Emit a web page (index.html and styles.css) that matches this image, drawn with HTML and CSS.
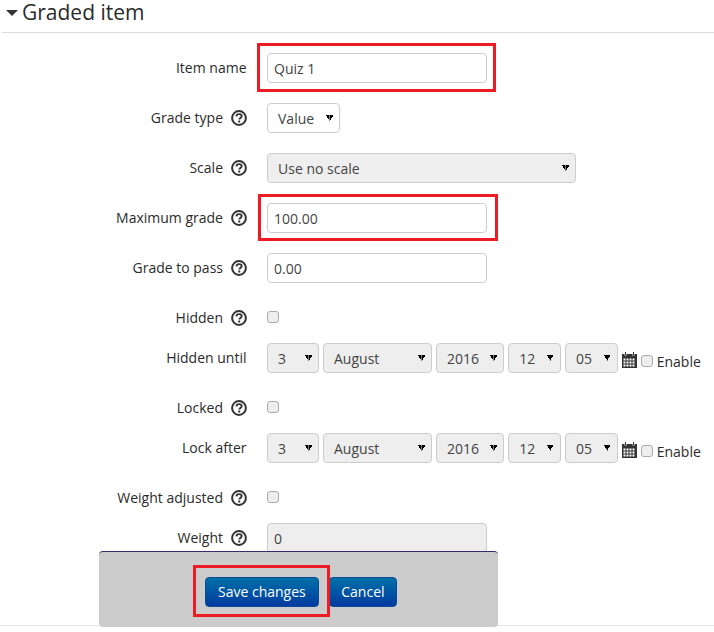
FILE: index.html
```html
<!DOCTYPE html>
<html lang="en">
<head>
    <meta charset="UTF-8">
    <meta name="viewport" content="width=device-width, initial-scale=1.0">
    <title>Graded item</title>
    <link rel="stylesheet" href="styles.css">
</head>
<body>

<svg class="defs" width="0" height="0">
    <symbol id="help" viewBox="0 0 16 16">
        <circle cx="8" cy="8" r="6.9" fill="none" stroke="currentColor" stroke-width="2"/>
        <path d="M5.4 6.4c.1-1.5 1.2-2.3 2.7-2.3 1.5 0 2.6.8 2.6 2 0 1-.6 1.5-1.4 2-.6.4-.9.7-.9 1.5" fill="none" stroke="currentColor" stroke-width="1.9"/>
        <rect x="7.2" y="10.5" width="2" height="2" fill="currentColor"/>
    </symbol>
    <symbol id="calendar" viewBox="0 0 15 16">
        <path d="M0 2h2.5v1.5h2V2h6v1.5h2V2H15v14H0z" fill="#333"/>
        <path d="M3 0h1v3H3zM11 0h1v3h-1z" fill="#333"/>
        <path d="M1.5 6.5h2v2h-2zM4.5 6.5h2v2h-2zM7.5 6.5h2v2h-2zM10.5 6.5h2v2h-2zM1.5 9.5h2v2h-2zM4.5 9.5h2v2h-2zM7.5 9.5h2v2h-2zM10.5 9.5h2v2h-2zM1.5 12.5h2v2h-2zM4.5 12.5h2v2h-2zM7.5 12.5h2v2h-2zM10.5 12.5h2v2h-2z" fill="#fff"/>
    </symbol>
</svg>

<div class="page">
    <h3 class="section-title"><span class="caret"></span>Graded item</h3>

    <form class="form">
        <div class="row">
            <label class="label plain">Item name</label>
            <input class="input" type="text" value="Quiz 1">
        </div>
        <div class="row">
            <label class="label">Grade type <svg class="help"><use href="#help"/></svg></label>
            <select class="select w-type"><option>Value</option></select>
        </div>
        <div class="row">
            <label class="label">Scale <svg class="help"><use href="#help"/></svg></label>
            <select class="select off w-scale"><option>Use no scale</option></select>
        </div>
        <div class="row">
            <label class="label">Maximum grade <svg class="help"><use href="#help"/></svg></label>
            <input class="input" type="text" value="100.00">
        </div>
        <div class="row">
            <label class="label">Grade to pass <svg class="help"><use href="#help"/></svg></label>
            <input class="input" type="text" value="0.00">
        </div>
        <div class="row short">
            <label class="label">Hidden <svg class="help"><use href="#help"/></svg></label>
            <input class="check" type="checkbox">
        </div>
        <div class="row">
            <label class="label plain">Hidden until</label>
            <div class="date">
                <select class="select off w-day"><option>3</option></select>
                <select class="select off w-month"><option>August</option></select>
                <select class="select off w-year"><option>2016</option></select>
                <select class="select off w-time"><option>12</option></select>
                <select class="select off w-time"><option>05</option></select>
                <svg class="calendar"><use href="#calendar"/></svg>
                <label class="enable"><input class="check" type="checkbox"> Enable</label>
            </div>
        </div>
        <div class="row short">
            <label class="label">Locked <svg class="help"><use href="#help"/></svg></label>
            <input class="check" type="checkbox">
        </div>
        <div class="row">
            <label class="label plain">Lock after</label>
            <div class="date">
                <select class="select off w-day"><option>3</option></select>
                <select class="select off w-month"><option>August</option></select>
                <select class="select off w-year"><option>2016</option></select>
                <select class="select off w-time"><option>12</option></select>
                <select class="select off w-time"><option>05</option></select>
                <svg class="calendar"><use href="#calendar"/></svg>
                <label class="enable"><input class="check" type="checkbox"> Enable</label>
            </div>
        </div>
        <div class="row short">
            <label class="label">Weight adjusted <svg class="help"><use href="#help"/></svg></label>
            <input class="check" type="checkbox">
        </div>
        <div class="row">
            <label class="label">Weight <svg class="help"><use href="#help"/></svg></label>
            <input class="input off" type="text" value="0">
        </div>
    </form>

    <div class="form-end"></div>

    <!-- Barra fija de botones -->
    <div class="actions">
        <button class="btn" type="button">Save changes</button>
        <button class="btn" type="button">Cancel</button>
    </div>

    <!-- Marcas rojas de la captura -->
    <div class="mark mark-name"></div>
    <div class="mark mark-grade"></div>
    <div class="mark mark-save"></div>
</div>

</body>
</html>
```

FILE: styles.css
```css
* {
    box-sizing: border-box;
}

body {
    margin: 0;
    font-family: 'Open Sans', 'Liberation Sans', sans-serif;
    font-size: 14px;
    color: #2b2b2b;
    background: #fff;
}

.defs {
    position: absolute;
}

.page {
    position: relative;
    width: 714px;
    height: 632px;
    overflow: hidden;
}

.section-title {
    display: flex;
    align-items: center;
    height: 33px;
    margin: 0 0 0 2px;
    padding: 0 0 7px 4px;
    border-bottom: 1px solid #ddd;
    font-size: 21px;
    font-weight: 400;
    line-height: 25px;
}

.caret {
    width: 0;
    height: 0;
    margin-right: 4px;
    border-left: 6px solid transparent;
    border-right: 6px solid transparent;
    border-top: 6px solid #333;
}

.form {
    padding-top: 20px;
}

.row {
    display: flex;
    align-items: center;
    gap: 20px;
    height: 30px;
    margin-bottom: 20px;
}

.row.short {
    margin-bottom: 10px;
}

.label {
    display: flex;
    justify-content: flex-end;
    align-items: center;
    gap: 8px;
    width: 247px;
    flex-shrink: 0;
    padding-bottom: 1px;
}

.label.plain {
    padding-right: 0.5px;
}

.help {
    width: 16px;
    height: 16px;
    color: #333;
}

.input {
    width: 220px;
    height: 30px;
    padding: 0 6px;
    border: 1px solid #ccc;
    border-radius: 4px;
    font: inherit;
    color: #444;
    background: #fff;
}

.input.off {
    background: #eee;
}

/* Flecha negra hecha con dos gradientes */
.select {
    appearance: none;
    height: 30px;
    padding: 0 0 0 10px;
    border: 1px solid #ccc;
    border-radius: 4px;
    font: inherit;
    color: #444;
    background-color: #fff;
    background-image: linear-gradient(to top right, transparent 50%, #000 50%), linear-gradient(to top left, transparent 50%, #000 50%);
    background-repeat: no-repeat;
    background-size: 3.5px 6px;
    background-position: right 9.5px top 11px, right 6px top 11px;
}

.select.off {
    background-color: #eee;
}

.w-type {
    width: 73px;
}

.w-scale {
    width: 309px;
}

.w-day {
    width: 52px;
}

.w-month {
    width: 109px;
}

.w-year {
    width: 68.3px;
}

.w-time {
    width: 52.7px;
}

.date {
    display: flex;
    align-items: center;
    gap: 4px;
}

.calendar {
    width: 15px;
    height: 16px;
    margin-top: 4px;
}

.check {
    appearance: none;
    width: 12px;
    height: 12px;
    margin: 0;
    border: 1px solid #aaa;
    border-radius: 3px;
    background: #eee;
}

.row > .check {
    margin-bottom: 2px;
}

.enable {
    display: flex;
    align-items: center;
    gap: 4px;
    margin-top: 6px;
}

.form-end {
    margin-top: 72px;
    border-top: 1px solid #e5e5e5;
}

.actions {
    position: absolute;
    left: 99px;
    top: 551px;
    display: flex;
    gap: 10px;
    width: 399px;
    height: 76px;
    padding: 25px 0 0 106px;
    border-top: 1px solid #3b2a6b;
    border-radius: 4px;
    background: #ccc;
}

.btn {
    height: 30px;
    padding: 0 12px 2px;
    border: 1px solid #0a4a96;
    border-radius: 4px;
    font: inherit;
    color: #fff;
    background: linear-gradient(to bottom, #0070a8, #003b9f);
}

.btn + .btn {
    padding: 0 11.5px 2px;
}

.mark {
    position: absolute;
    border: 3px solid #ed1c24;
}

.mark-name {
    left: 257px;
    top: 43px;
    width: 239px;
    height: 49px;
}

.mark-grade {
    left: 258px;
    top: 194px;
    width: 240px;
    height: 47px;
}

.mark-save {
    left: 193px;
    top: 565px;
    width: 137px;
    height: 52px;
}
```
